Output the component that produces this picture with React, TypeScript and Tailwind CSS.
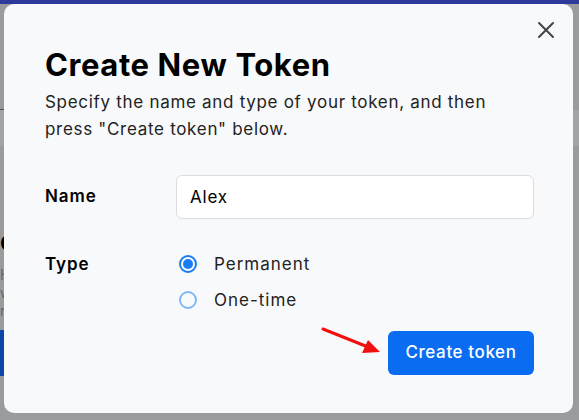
import React from "react"

export default function App() {
  return (
    <div className="relative h-[420px] w-[579px] overflow-hidden bg-[#9a9b9d] font-['Inter',sans-serif]">
      {/* dimmed page behind the dialog */}
      <div className="h-[4px] bg-[#2e3a9a]" />
      <div className="mt-[105px] h-px w-[12px] bg-[#555]" />
      <div className="h-[36px] bg-[#a3a4a6]" />
      <div className="mt-[86px] pl-0 text-[22px] font-bold leading-none text-black">C</div>
      <div className="mt-[12px] text-[14px] leading-[18px] text-[#666]">
        <div>H</div>
        <div>w</div>
        <div>r</div>
      </div>
      <div className="mt-[10px] h-[46px] w-[12px] bg-[#0b47a8]" />

      <div className="absolute left-[4px] top-[4px] h-[409px] w-[569px] rounded-[10px] bg-[#f8f9fb] pl-[41px] pr-[39px] pt-[42px]">
        <button className="absolute right-[15px] top-[14px] text-[#444]">
          <svg width="24" height="24" viewBox="0 0 24 24" fill="none" stroke="currentColor" strokeWidth="2" strokeLinecap="round">
            <path d="M5 5l14 14M19 5L5 19" />
          </svg>
        </button>
        <h1 className="text-[31px] font-bold leading-[38px] tracking-[0.6px] text-black">Create New Token</h1>
        <p className="mt-[5px] text-[17px] leading-[27px] tracking-[0.7px] text-[#222]">
          Specify the name and type of your token, and then
          <br />
          press "Create token" below.
        </p>

        <div className="mt-[32px] flex items-center">
          <label className="w-[131px] shrink-0 text-[17px] font-semibold tracking-[0.9px] text-black">Name</label>
          <input
            defaultValue="Alex"
            className="h-[44px] w-[358px] shrink-0 rounded-[6px] border border-[#dcdde0] bg-white px-[13px] text-[17px] tracking-[0.8px] text-black outline-none"
          />
        </div>

        <div className="mt-[33px] flex">
          <div className="w-[134px] text-[17px] font-semibold leading-[24px] tracking-[0.9px] text-black">Type</div>
          <div className="flex flex-col gap-[12px]">
            <div className="flex items-center gap-[17px]">
              <span className="flex h-[18px] w-[18px] items-center justify-center rounded-full border-2 border-[#1a7cf2]">
                <span className="h-[10px] w-[10px] rounded-full bg-[#1a7cf2]" />
              </span>
              <span className="text-[17px] leading-[24px] tracking-[1px] text-[#222]">Permanent</span>
            </div>
            <div className="flex items-center gap-[17px]">
              <span className="h-[18px] w-[18px] rounded-full border-2 border-[#7fb8f7]" />
              <span className="text-[17px] leading-[24px] tracking-[1px] text-[#222]">One-time</span>
            </div>
          </div>
        </div>

        <div className="mt-[19px] flex justify-end">
          <button className="h-[44px] w-[146px] rounded-[6px] bg-[#0a6cf0] text-[17px] font-medium tracking-[0.6px] text-white">
            Create token
          </button>
        </div>

        <svg className="absolute left-[316px] top-[322px]" width="64" height="32" viewBox="0 0 64 32">
          <path d="M3 3 L48 21" stroke="#f01010" strokeWidth="3" strokeLinecap="round" />
          <path d="M60 26 L42 27 L48 14 Z" fill="#f01010" />
        </svg>
      </div>
    </div>
  )
}
